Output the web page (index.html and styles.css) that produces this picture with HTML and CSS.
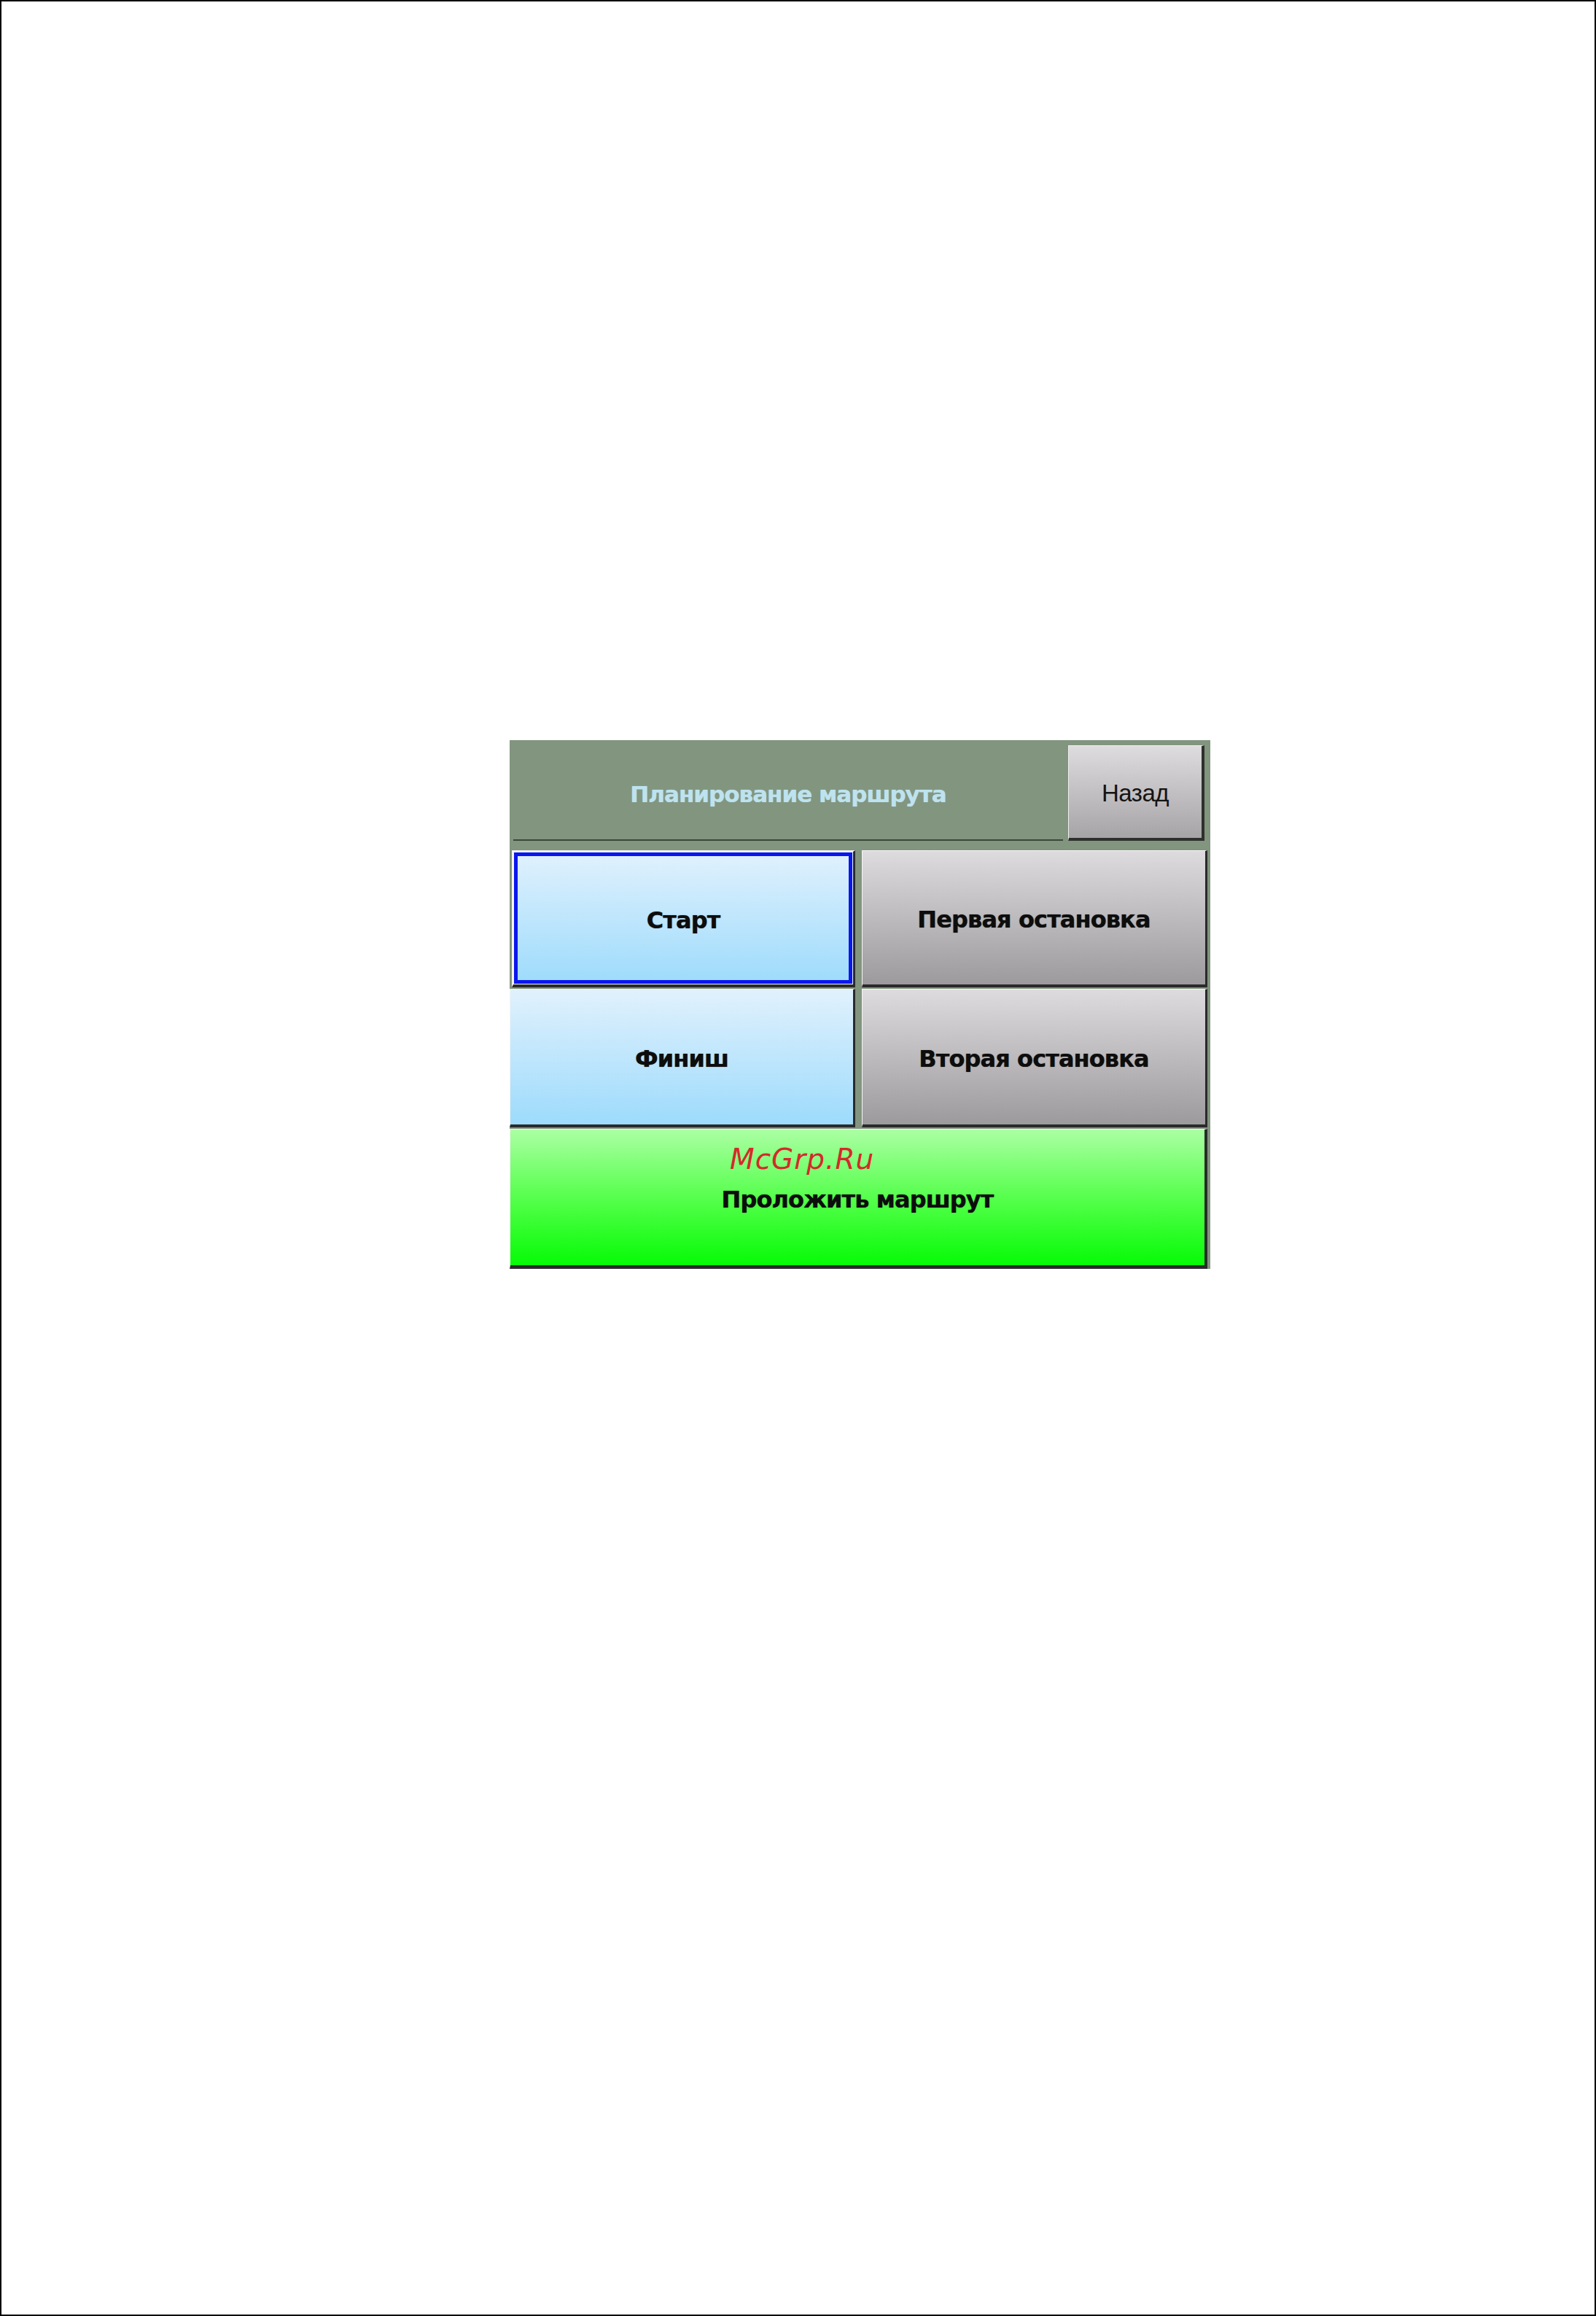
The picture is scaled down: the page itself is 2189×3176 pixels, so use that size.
FILE: index.html
```html
<!DOCTYPE html>
<html lang="ru">
<head>
<meta charset="utf-8">
<title>Планирование маршрута</title>
<link rel="stylesheet" href="styles.css">
</head>
<body>
<div class="page">
  <div class="ui">
    <div class="header">
      <div class="title-area"><span class="title">Планирование маршрута</span></div>
      <div class="back">Назад</div>
    </div>
    <div class="grid">
      <div class="btn blue start"><span>Старт</span></div>
      <div class="btn gray stop1"><span>Первая остановка</span></div>
      <div class="btn blue finish"><span>Финиш</span></div>
      <div class="btn gray stop2"><span>Вторая остановка</span></div>
      <div class="btn green route">
        <span class="watermark">McGrp.Ru</span>
        <span>Проложить маршрут</span>
      </div>
    </div>
  </div>
</div>
</body>
</html>
```

FILE: styles.css
```css
html, body {
  margin: 0;
  padding: 0;
  background: #ffffff;
}

.page {
  width: 2189px;
  height: 3176px;
  box-sizing: border-box;
  border: 2px solid #000000;
  padding: 1013px 0 0 697px;
  background: #ffffff;
}

.ui {
  width: 961px;
  height: 725px;
  background: #82957f;
  display: flex;
  flex-direction: column;
}

.header {
  height: 151px;
  box-sizing: border-box;
  padding: 7px 8px 13px 5px;
  display: flex;
  gap: 7px;
}

.title-area {
  flex: 1;
  border-bottom: 2px solid #3b473a;
  display: flex;
  align-items: center;
  justify-content: center;
  padding-top: 4px;
}

.title {
  font-family: "DejaVu Sans", sans-serif;
  font-weight: bold;
  font-size: 31px;
  letter-spacing: -1px;
  color: #bee3ef;
  text-shadow: 0 0 1px rgba(190, 227, 239, 0.8);
}

.back {
  width: 187px;
  box-sizing: border-box;
  background: linear-gradient(#dedcdf, #a7a4a7);
  border-top: 1px solid #eeeeee;
  border-left: 1px solid #eeeeee;
  border-right: 4px solid #2d302c;
  border-bottom: 4px solid #2d302c;
  display: flex;
  align-items: center;
  justify-content: center;
  padding-top: 4px;
  font-family: "Liberation Sans", Arial, sans-serif;
  font-size: 33px;
  letter-spacing: -0.5px;
  color: #141414;
}

.grid {
  flex: 1;
  display: grid;
  grid-template-columns: 474px 474px;
  grid-template-rows: 188px 190px 192px;
  column-gap: 9px;
  row-gap: 2px;
  padding-right: 4px;
}

.btn {
  position: relative;
  box-sizing: border-box;
  border-right: 3px solid #2a2a2a;
  border-bottom: 4px solid #2a2a2a;
  border-top: 1px solid #f4f4f4;
  border-left: 1px solid #f4f4f4;
  display: flex;
  align-items: center;
  justify-content: center;
  padding-top: 5px;
  font-family: "DejaVu Sans", sans-serif;
  font-weight: bold;
  font-size: 32px;
  letter-spacing: -0.9px;
  color: #0d0d0d;
  text-shadow: 0 0 1px rgba(0, 0, 0, 0.7);
}

.blue {
  background: linear-gradient(#e1f1fd, #9ddbfc);
}

.gray {
  background: linear-gradient(#dedbdf, #9c9a9c);
}

.green {
  background: linear-gradient(#abffa3, #4eff45 55%, #06fb06);
}

.start {
  margin-left: 3px;
  border-left-width: 2px;
  border-top-width: 2px;
  box-shadow: inset 0 0 0 1px #eaf6ff, inset 0 0 0 6px #0a16ee;
}

.route {
  grid-column: 1 / span 2;
  border-right-width: 4px;
  border-bottom-width: 5px;
  padding-top: 6px;
}

.watermark {
  position: absolute;
  left: 301px;
  top: 21px;
  font-family: "DejaVu Sans", sans-serif;
  font-weight: normal;
  font-style: oblique;
  font-size: 39px;
  line-height: 39px;
  letter-spacing: 1px;
  color: #d42a2a;
  text-shadow: none;
}
```
